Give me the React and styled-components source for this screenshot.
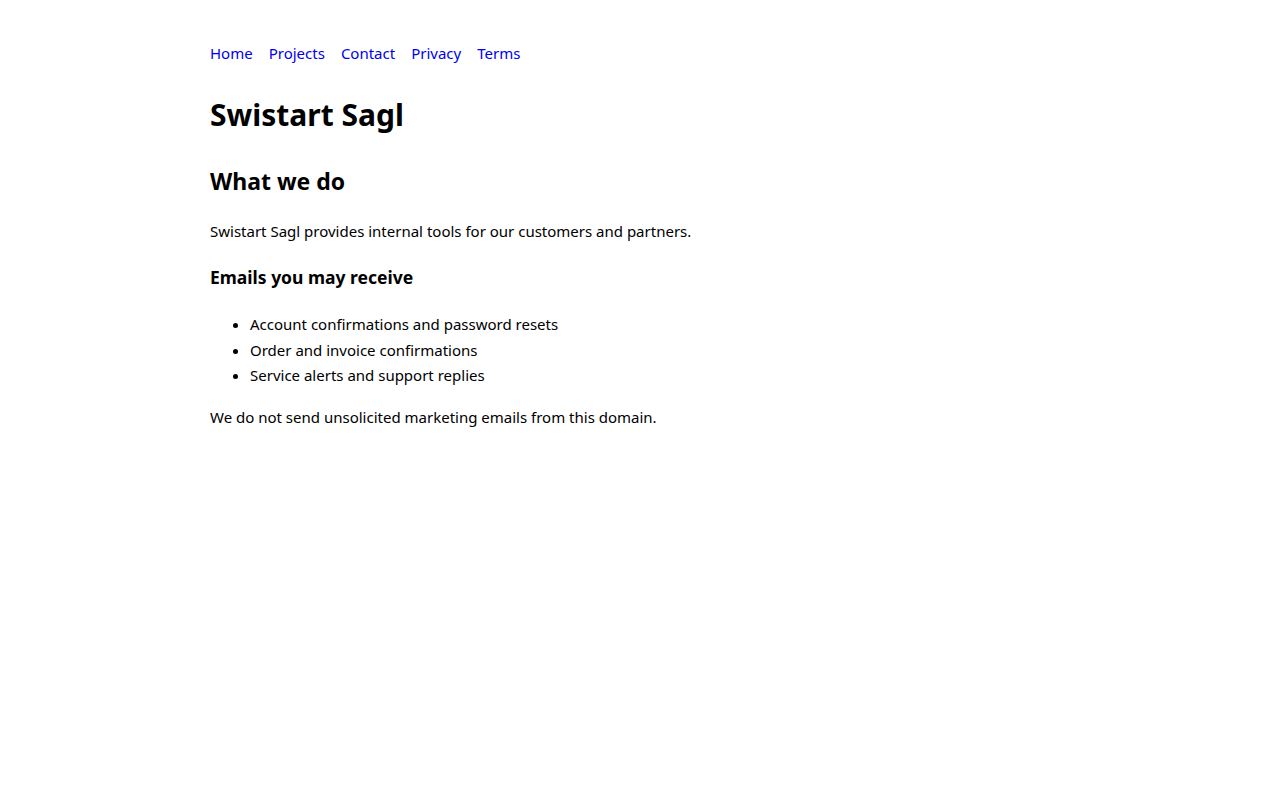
import React from 'react'
import styled, { createGlobalStyle } from 'styled-components'

const GlobalStyle = createGlobalStyle`
  body {
    margin: 0;
    background: #fff;
    color: #000;
    font-family: "Segoe UI", "Noto Sans", sans-serif;
    font-size: 15px;
    line-height: 25.6px;
  }
`;

const Page = styled.div`
  max-width: 860px;
  margin: 0 auto;
  padding: 41px 0;
`;

const Nav = styled.nav`
  display: flex;
  gap: 16px;
`;

const NavLink = styled.a`
  color: #0000ee;
  text-decoration: none;
`;

const Title = styled.h1`
  font-size: 30px;
  line-height: 38px;
  margin: 29px 0 0;
`;

const Heading = styled.h2`
  font-size: 23px;
  line-height: 29px;
  margin: 33px 0 0;
`;

const SubHeading = styled.h3`
  font-size: 17.5px;
  line-height: 22px;
  margin: 22px 0 0;
`;

const Text = styled.p`
  margin: ${(p) => (p.$last ? '16px' : '23px')} 0 0;
`;

const List = styled.ul`
  margin: 24px 0 0;
  padding-left: 40px;
`;

const links = ['Home', 'Projects', 'Contact', 'Privacy', 'Terms'];

const emails = [
  'Account confirmations and password resets',
  'Order and invoice confirmations',
  'Service alerts and support replies',
];

const App = () => {
  return (
    <Page>
      <GlobalStyle />
      <Nav>
        {links.map((l) => (
          <NavLink key={l} href="#">{l}</NavLink>
        ))}
      </Nav>
      <Title>Swistart Sagl</Title>
      <Heading>What we do</Heading>
      <Text>Swistart Sagl provides internal tools for our customers and partners.</Text>
      <SubHeading>Emails you may receive</SubHeading>
      <List>
        {emails.map((e) => (
          <li key={e}>{e}</li>
        ))}
      </List>
      <Text $last>We do not send unsolicited marketing emails from this domain.</Text>
    </Page>
  )
}

export default App;
